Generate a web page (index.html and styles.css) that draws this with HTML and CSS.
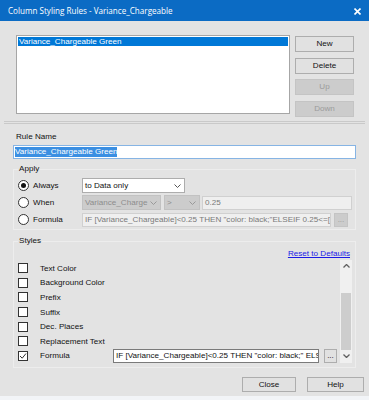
FILE: index.html
```html
<!DOCTYPE html>
<html lang="en">
  <head>
    <meta charset="utf-8" />
    <title>Column Styling Rules</title>
    <link rel="stylesheet" href="styles.css">
  </head>
  <body>
    <div class="dialog">
      <div class="titlebar">
        <span class="title">Column Styling Rules - Variance_Chargeable</span>
        <svg class="close-x" width="7" height="7" viewBox="0 0 7 7">
          <path d="M0.5 0.5 L6.5 6.5 M6.5 0.5 L0.5 6.5" stroke="#fff" stroke-width="1.6" />
        </svg>
      </div>

      <div class="top-row">
        <div class="rules-list">
          <div class="rule-item selected">Variance_Chargeable Green</div>
        </div>
        <div class="side-buttons">
          <button class="btn">New</button>
          <button class="btn">Delete</button>
          <button class="btn disabled">Up</button>
          <button class="btn disabled">Down</button>
        </div>
      </div>

      <div class="separator"></div>

      <div class="field-label">Rule Name</div>
      <div class="name-input"><span class="sel-text">Variance_Chargeable Green</span></div>

      <fieldset class="group apply">
        <legend>Apply</legend>
        <div class="apply-row">
          <div class="opt"><span class="radio checked"></span><span>Always</span></div>
          <div class="combo w-data"><span>to Data only</span><svg class="chev" width="7" height="4" viewBox="0 0 7 4"><path d="M0.5 0.5 L3.5 3.5 L6.5 0.5" fill="none" stroke="#555" /></svg></div>
        </div>
        <div class="apply-row">
          <div class="opt"><span class="radio"></span><span>When</span></div>
          <div class="combo off w-col"><span>Variance_Charge</span><svg class="chev" width="7" height="4" viewBox="0 0 7 4"><path d="M0.5 0.5 L3.5 3.5 L6.5 0.5" fill="none" stroke="#999" /></svg></div>
          <div class="combo off w-op"><span>&gt;</span><svg class="chev" width="7" height="4" viewBox="0 0 7 4"><path d="M0.5 0.5 L3.5 3.5 L6.5 0.5" fill="none" stroke="#999" /></svg></div>
          <div class="text-box off w-val">0.25</div>
        </div>
        <div class="apply-row">
          <div class="opt"><span class="radio"></span><span>Formula</span></div>
          <div class="text-box off w-formula">IF [Variance_Chargeable]&lt;0.25 THEN "color: black;"ELSEIF 0.25&lt;=[V</div>
          <button class="btn dots disabled">...</button>
        </div>
      </fieldset>

      <fieldset class="group styles">
        <legend>Styles</legend>
        <div class="reset-row"><a class="reset-link" href="#">Reset to Defaults</a></div>
        <div class="style-list">
          <div class="style-rows">
            <div class="style-row"><span class="check"></span><span class="style-name">Text Color</span></div>
            <div class="style-row"><span class="check"></span><span class="style-name">Background Color</span></div>
            <div class="style-row"><span class="check"></span><span class="style-name">Prefix</span></div>
            <div class="style-row"><span class="check"></span><span class="style-name">Suffix</span></div>
            <div class="style-row"><span class="check"></span><span class="style-name">Dec. Places</span></div>
            <div class="style-row"><span class="check"></span><span class="style-name">Replacement Text</span></div>
            <div class="style-row">
              <span class="check">
                <svg width="8" height="8" viewBox="0 0 8 8"><path d="M1 4 L3.2 6.2 L7 1.5" fill="none" stroke="#333" stroke-width="1" /></svg>
              </span>
              <span class="style-name">Formula</span>
              <div class="text-box w-style">IF [Variance_Chargeable]&lt;0.25 THEN "color: black;" ELS</div>
              <button class="btn dots">...</button>
            </div>
          </div>
          <div class="scrollbar">
            <div class="sb-arrow">
              <svg width="7" height="4" viewBox="0 0 7 4"><path d="M0.5 3.5 L3.5 0.5 L6.5 3.5" fill="none" stroke="#606060" stroke-width="1.3" /></svg>
            </div>
            <div class="sb-track"></div>
            <div class="sb-thumb"></div>
            <div class="sb-arrow">
              <svg width="7" height="4" viewBox="0 0 7 4"><path d="M0.5 0.5 L3.5 3.5 L6.5 0.5" fill="none" stroke="#606060" stroke-width="1.3" /></svg>
            </div>
          </div>
        </div>
      </fieldset>

      <div class="footer">
        <button class="btn footer-btn close">Close</button>
        <button class="btn footer-btn help">Help</button>
      </div>
      <div class="bottom-strip"></div>
    </div>
  </body>
</html>
```

FILE: styles.css
```css
* {
  margin: 0;
  padding: 0;
  box-sizing: border-box;
}
body {
  width: 369px;
  height: 400px;
  overflow: hidden;
  background-color: #e3e3e3;
  font-family: "Liberation Sans", Arial, sans-serif;
  font-size: 8.1px;
  color: #111;
}
.dialog {
  display: flex;
  flex-direction: column;
  height: 400px;
}
.titlebar {
  height: 21px;
  flex: none;
  background-color: #0b6bc4;
  color: #fff;
  display: flex;
  align-items: center;
  justify-content: space-between;
  padding: 0 8px 0 8px;
}
.title {
  font-family: "Open Sans", "Noto Sans", sans-serif;
  font-size: 8.1px;
}
.close-x {
  margin-top: 1px;
}

/* rules list + buttons */
.top-row {
  display: flex;
  height: 82px;
  margin: 14px 0 0 16px;
}
.rules-list {
  width: 274px;
  height: 79px;
  background-color: #fff;
  border: 1px solid #a6a6a6;
  padding: 1px;
}
.rule-item {
  height: 9px;
  line-height: 9px;
  padding-left: 1px;
  white-space: nowrap;
}
.rule-item.selected {
  background-color: #0078d7;
  color: #fff;
}
.side-buttons {
  display: flex;
  flex-direction: column;
  gap: 5.6px;
  width: 59px;
  margin-left: 5px;
  padding-top: 1px;
}
.btn {
  height: 16px;
  background-color: #e1e1e1;
  border: 1px solid #adadad;
  font-family: "Liberation Sans", Arial, sans-serif;
  font-size: 8.1px;
  color: #111;
  line-height: 14px;
}
.btn.disabled {
  background-color: #cccccc;
  border-color: #c4c4c4;
  color: #9b9b9b;
}
.separator {
  height: 3px;
  margin: 4px 4px 0 4px;
  border-top: 1px solid #c9c9c9;
  border-bottom: 1px solid #c9c9c9;
}

/* rule name */
.field-label {
  margin: 8px 0 0 16px;
  line-height: 10px;
}
.name-input {
  width: 343px;
  height: 14px;
  margin: 3px 0 0 13px;
  background-color: #fff;
  border: 1px solid #86b4e4;
  padding: 1px 1px;
  line-height: 10px;
}
.sel-text {
  display: inline-block;
  background-color: #3b8fe2;
  color: #fff;
  line-height: 10px;
}

/* group boxes */
.group {
  width: 343px;
  margin-left: 13px;
  border: 1px solid #ededed;
  padding: 4px 3px 2px 4px;
}
.group legend {
  padding: 0 1px;
  line-height: 10px;
}
.apply {
  margin-top: 5px;
}
.apply-row {
  display: flex;
  align-items: center;
  height: 15px;
  margin-bottom: 2px;
}
.apply-row:last-child {
  margin-bottom: 0;
}
.opt {
  width: 64px;
  display: flex;
  align-items: center;
  gap: 4px;
}
.radio {
  width: 11px;
  height: 11px;
  border: 1px solid #333;
  border-radius: 50%;
  background-color: #fff;
  display: flex;
  align-items: center;
  justify-content: center;
}
.radio.checked::after {
  content: "";
  width: 5px;
  height: 5px;
  border-radius: 50%;
  background-color: #111;
}
.combo {
  height: 15px;
  background-color: #fff;
  border: 1px solid #adadad;
  display: flex;
  align-items: center;
  justify-content: space-between;
  padding: 0 3px 0 2px;
  white-space: nowrap;
  overflow: hidden;
}
.combo.off {
  background-color: #cccccc;
  border-color: #c2c2c2;
  color: #8c8c8c;
}
.w-data {
  width: 103px;
}
.w-col {
  width: 79px;
}
.w-op {
  width: 36px;
  margin-left: 3px;
}
.text-box {
  height: 14px;
  background-color: #fff;
  border: 1px solid #7a7a7a;
  padding: 0 2px;
  line-height: 12px;
  white-space: nowrap;
  overflow: hidden;
}
.text-box.off {
  background-color: #efefef;
  border-color: #d0d0d0;
  color: #7a7a7a;
}
.w-val {
  width: 150px;
  margin-left: 2px;
}
.w-formula {
  width: 249px;
}
.dots {
  height: 14px;
  line-height: 10px;
  width: 14px;
  margin-left: 3px;
  padding: 0;
}

/* styles list */
.styles {
  margin-top: 6px;
  padding-top: 3px;
  padding-bottom: 4px;
}
.reset-row {
  height: 10px;
  line-height: 10px;
  text-align: right;
  padding-right: 2px;
}
.reset-link {
  color: #1a1ae6;
}
.style-list {
  display: flex;
  height: 103px;
  margin-top: 1px;
}
.style-rows {
  flex: 1;
  padding-top: 1px;
}
.style-row {
  display: flex;
  align-items: center;
  height: 14.6px;
}
.check {
  width: 10px;
  height: 10px;
  border: 1px solid #333;
  background-color: #fff;
  display: flex;
  align-items: center;
  justify-content: center;
}
.style-name {
  width: 73px;
  margin-left: 12px;
  white-space: nowrap;
}
.w-style {
  width: 206px;
}
.style-row .dots {
  width: 13px;
  margin-left: 5px;
}
.scrollbar {
  width: 12px;
  display: flex;
  flex-direction: column;
  background-color: #f0f0f0;
}
.sb-arrow {
  height: 12px;
  display: flex;
  align-items: center;
  justify-content: center;
}
.sb-track {
  height: 21px;
}
.sb-thumb {
  height: 57px;
  margin: 0 1px;
  background-color: #cdcdcd;
}

/* footer */
.footer {
  display: flex;
  justify-content: flex-end;
  gap: 11px;
  margin-top: 9px;
  padding-right: 5px;
}
.footer-btn {
  height: 15px;
  line-height: 13px;
}
.close {
  width: 54px;
}
.help {
  width: 57px;
}
.bottom-strip {
  margin-top: auto;
  height: 4px;
  background-color: #f2f4f7;
}
```
